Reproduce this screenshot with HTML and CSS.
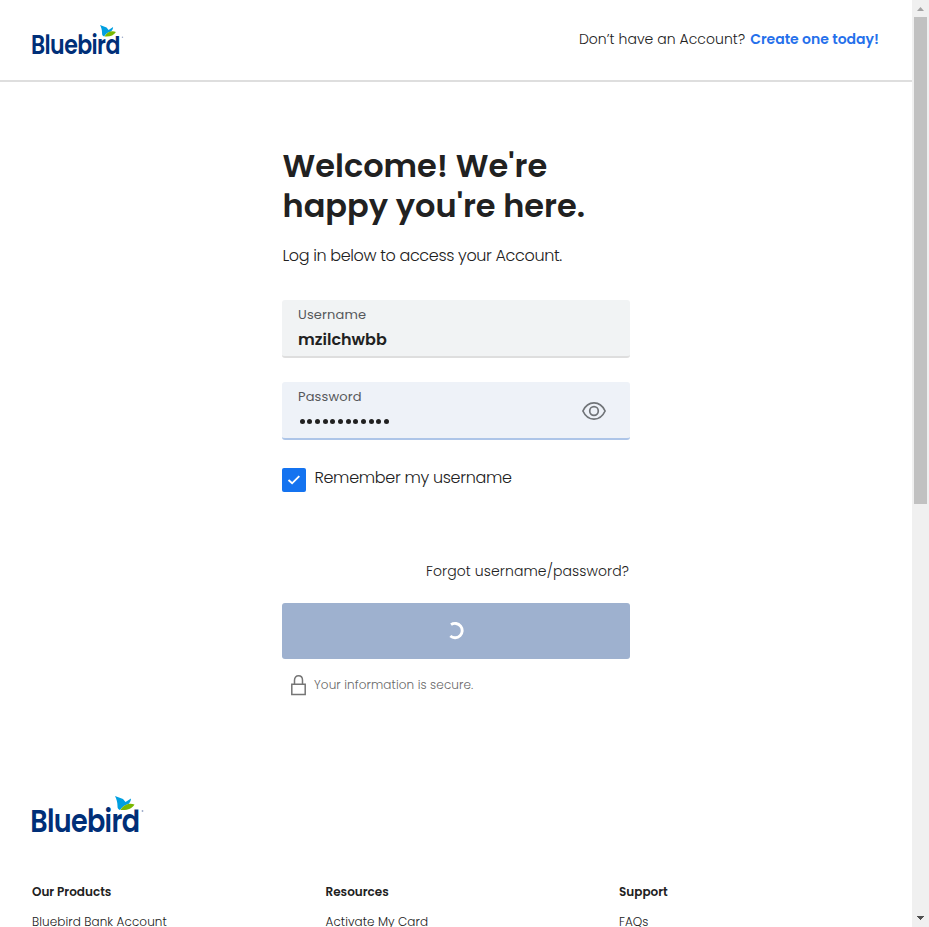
FILE: index.html
```html
<!DOCTYPE html>
<html lang="en">
<head>
<meta charset="utf-8">
<title>Bluebird - Log in</title>
<link rel="stylesheet" href="styles.css">
</head>
<body>
<div class="page">
  <header class="header">
    <svg class="header-logo" viewBox="0 0 112 38" role="img" aria-label="Bluebird">
      <text class="wordmark" x="-1.700" y="36" textLength="109" lengthAdjust="spacingAndGlyphs">Bluebird</text>
      <path fill="#fff" d="M82 0h27v13.500H82z"/>
      <path fill="#009fe0" d="M83 0l8 3 2.500 3L99 2.500c0 2-1 4-2.500 5.500-4 1-6.500 3-8.500 6-1.500-1-2.500-1-2.500-4 0-4-1-7-2.500-10z"/>
      <path fill="#7ab800" d="M88.500 14c3-5 8-7.500 14-5.500-3 4.500-7 6-14 5.500z"/>
      <circle cx="110.500" cy="15" r=".9" fill="#9ba8c8"/>
    </svg>
    <p class="signup"><span class="signup-question">Don’t have an Account?</span><a class="signup-link">Create one today!</a></p>
  </header>
  <main class="login">
    <h1 class="title">Welcome! We're<br>happy you're here.</h1>
    <p class="intro">Log in below to access your Account.</p>
    <div class="field">
      <div><div class="label">Username</div><div class="value">mzilchwbb</div></div>
    </div>
    <div class="field field-active">
      <div><div class="label">Password</div>
        <div class="dots"><i></i><i></i><i></i><i></i><i></i><i></i><i></i><i></i><i></i><i></i><i></i><i></i></div></div>
      <svg class="eye" viewBox="0 0 24 18"><path d="M.9 9C3.200 4 7 .9 12 .9S20.800 4 23.100 9C20.800 14 17 17.100 12 17.100S3.200 14 .9 9z"/><circle cx="12" cy="9" r="4.300"/></svg>
    </div>
    <div class="remember">
      <svg class="checkbox" viewBox="0 0 24 24"><rect width="24" height="24" rx="2" fill="#1473f0"/><path d="M6.500 12l3.600 3.300 7.200-7.200" fill="none" stroke="#fff" stroke-width="1.900"/></svg>
      <span>Remember my username</span>
    </div>
    <a class="forgot">Forgot username/password?</a>
    <div class="submit"><svg class="spinner" viewBox="0 0 18 18"><path d="M4 2.600A7.200 7.200 0 1 1 3.300 14"/></svg></div>
    <p class="secure"><svg class="lock" viewBox="0 0 15 21"><path d="M.8 9.200h13.400v10.300H.8zM3.500 9V5.200C3.500 2.500 5.100.8 7.500.8s4 1.700 4 4.400V9"/></svg><span>Your information is secure.</span></p>
  </main>
  <footer class="footer">
    <svg class="footer-logo" viewBox="0 0 112 38" role="img" aria-label="Bluebird">
      <text class="wordmark" x="-1.700" y="36" textLength="109" lengthAdjust="spacingAndGlyphs">Bluebird</text>
      <path fill="#fff" d="M82 0h27v13.500H82z"/>
      <path fill="#009fe0" d="M83 0l8 3 2.500 3L99 2.500c0 2-1 4-2.500 5.500-4 1-6.500 3-8.500 6-1.500-1-2.500-1-2.500-4 0-4-1-7-2.500-10z"/>
      <path fill="#7ab800" d="M88.500 14c3-5 8-7.500 14-5.500-3 4.500-7 6-14 5.500z"/>
      <circle cx="110.500" cy="15" r=".9" fill="#9ba8c8"/>
    </svg>
    <div class="columns">
      <section><h2>Our Products</h2><a class="bank">Bluebird Bank Account</a></section>
      <section><h2>Resources</h2><a class="activate">Activate My Card</a></section>
      <section><h2>Support</h2><a>FAQs</a></section>
    </div>
  </footer>
</div>
<div class="scrollbar">
  <svg class="arrow" viewBox="0 0 17 17"><path d="M5 11l3.500-4 3.500 4z" fill="#a3a3a3"/></svg>
  <div class="thumb"></div>
  <svg class="arrow arrow-down" viewBox="0 0 17 17" shape-rendering="crispEdges"><path d="M5 6h7v1H5zM6 7h5v1H6zM7 8h3v1H7zM8 9h1v1H8z" fill="#505050"/></svg>
</div>
</body>
</html>
```
FILE: styles.css
```css
* { box-sizing: border-box; margin: 0; }
body { display: grid; grid-template-columns: 1fr 17px; height: 927px; overflow: hidden; background: #fff; color: #212121; font: 300 16px/24px Poppins, Inter, sans-serif; }
.page { height: 927px; overflow: hidden; white-space: nowrap; }
svg { display: block; flex: none; overflow: visible; }
.header { height: 82px; border-bottom: 2px solid #dedede; padding: 25px 33px 0 32px; display: flex; justify-content: space-between; align-items: flex-start; }
.header-logo { width: 92px; height: 31px; }
.footer-logo { width: 112px; height: 38px; }
.wordmark { font: 600 31.500px Poppins, Lato, sans-serif; letter-spacing: -.8px; fill: #002f78; }
.signup { display: flex; gap: 5px; font-size: 14px; line-height: 28px; }
.signup-question { letter-spacing: .05px; }
.signup-link { font-weight: 600; color: #2570eb; }
.login { width: 348px; margin: 64px auto 0 282px; display: flex; flex-direction: column; }
.title { font-size: 32px; line-height: 40px; font-weight: 600; padding-left: .500px; }
.intro { margin-top: 18px; padding-left: .400px; letter-spacing: -.36px; }
.field { height: 58px; margin-top: 32px; padding: 5px 24px 0 16px; background: #f1f3f4; border-bottom: 2px solid #dedede; border-radius: 3px; display: flex; justify-content: space-between; }
.field-active { margin-top: 24px; background: #eef2f8; border-color: #adc5e8; }
.label { font-size: 13px; line-height: 20px; font-weight: 400; color: #56585b; letter-spacing: .15px; }
.value { font-weight: 600; line-height: 30px; }
.dots { display: flex; gap: 2.700px; padding: 12px 0 0 1.500px; }
.dots i { width: 5px; height: 5px; border-radius: 50%; background: #212121; }
.eye { width: 24px; height: 18px; margin-top: 15px; fill: none; stroke: #707478; stroke-width: 1.700; }
.remember { display: flex; gap: 8.400px; margin-top: 28px; height: 24px; line-height: 20px; letter-spacing: -.32px; }
.checkbox { width: 24px; height: 24px; }
.forgot { align-self: flex-end; margin: 67px 1px 0 0; font-size: 14px; line-height: 24px; letter-spacing: .09px; }
.submit { height: 56px; margin-top: 20px; background: #9eb1cf; border-radius: 3px; display: flex; align-items: center; justify-content: center; }
.spinner { width: 18px; height: 18px; fill: none; stroke: #fff; stroke-width: 2.900; }
.secure { display: flex; gap: 8px; padding-left: 9px; margin-top: 16px; font-size: 12px; line-height: 20px; color: #686868; letter-spacing: .1px; }
.lock { width: 15px; height: 21px; margin-left: -.500px; margin-right: .500px; fill: none; stroke: #757575; stroke-width: 1.500; }
.footer { padding: 100px 0 0 32px; }
.columns { display: grid; grid-template-columns: repeat(3, 293.500px); margin-top: 48px; font-size: 12px; }
.columns h2 { font-size: 12px; line-height: 20px; font-weight: 600; }
.columns a { display: block; margin-top: 8px; }
.bank { letter-spacing: .08px; }
.activate { letter-spacing: .06px; }
.scrollbar { height: 927px; background: #f0f0f0; display: flex; flex-direction: column; }
.arrow { width: 17px; height: 17px; }
.thumb { width: 13px; height: 487px; margin-left: 2px; background: #c1c1c1; }
.arrow-down { margin-top: auto; }
```
